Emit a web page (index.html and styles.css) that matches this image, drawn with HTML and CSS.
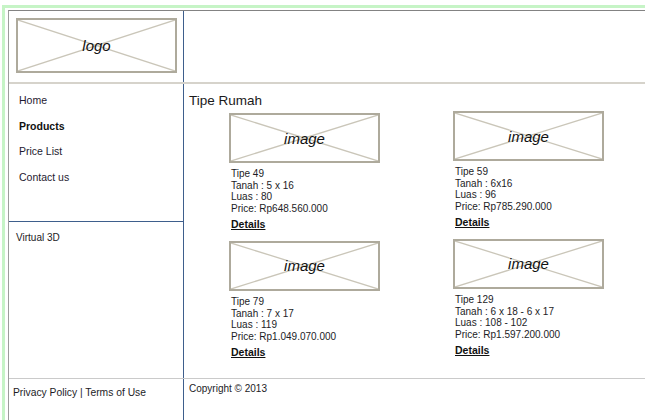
FILE: index.html
```html
<!DOCTYPE html>
<html lang="id">
<head>
<meta charset="utf-8">
<title>Tipe Rumah</title>
<link rel="stylesheet" href="styles.css">
</head>
<body>
<div class="frame">
  <div class="page">
    <div class="row head">
      <div class="side">
        <div class="ph logo">
          <svg class="ph-x" viewBox="0 0 100 100" preserveAspectRatio="none"><line x1="0" y1="0" x2="100" y2="100"/><line x1="100" y1="0" x2="0" y2="100"/></svg>
          <span>logo</span>
        </div>
      </div>
      <div class="main"></div>
    </div>

    <div class="row body">
      <div class="side">
        <ul class="nav">
          <li><a href="#">Home</a></li>
          <li class="active"><a href="#">Products</a></li>
          <li><a href="#">Price List</a></li>
          <li><a href="#">Contact us</a></li>
        </ul>
        <div class="extra">Virtual 3D</div>
      </div>
      <div class="main">
        <h1>Tipe Rumah</h1>
        <div class="grid">
          <div class="card low">
            <div class="ph pic">
              <svg class="ph-x" viewBox="0 0 100 100" preserveAspectRatio="none"><line x1="0" y1="0" x2="100" y2="100"/><line x1="100" y1="0" x2="0" y2="100"/></svg>
              <span>image</span>
            </div>
            <div class="info">
              <div>Tipe 49</div>
              <div>Tanah : 5 x 16</div>
              <div>Luas : 80</div>
              <div>Price: Rp648.560.000</div>
            </div>
            <a class="details" href="#">Details</a>
          </div>
          <div class="card">
            <div class="ph pic">
              <svg class="ph-x" viewBox="0 0 100 100" preserveAspectRatio="none"><line x1="0" y1="0" x2="100" y2="100"/><line x1="100" y1="0" x2="0" y2="100"/></svg>
              <span>image</span>
            </div>
            <div class="info">
              <div>Tipe 59</div>
              <div>Tanah : 6x16</div>
              <div>Luas : 96</div>
              <div>Price: Rp785.290.000</div>
            </div>
            <a class="details" href="#">Details</a>
          </div>
          <div class="card low">
            <div class="ph pic">
              <svg class="ph-x" viewBox="0 0 100 100" preserveAspectRatio="none"><line x1="0" y1="0" x2="100" y2="100"/><line x1="100" y1="0" x2="0" y2="100"/></svg>
              <span>image</span>
            </div>
            <div class="info">
              <div>Tipe 79</div>
              <div>Tanah : 7 x 17</div>
              <div>Luas : 119</div>
              <div>Price: Rp1.049.070.000</div>
            </div>
            <a class="details" href="#">Details</a>
          </div>
          <div class="card">
            <div class="ph pic">
              <svg class="ph-x" viewBox="0 0 100 100" preserveAspectRatio="none"><line x1="0" y1="0" x2="100" y2="100"/><line x1="100" y1="0" x2="0" y2="100"/></svg>
              <span>image</span>
            </div>
            <div class="info">
              <div>Tipe 129</div>
              <div>Tanah : 6 x 18 - 6 x 17</div>
              <div>Luas : 108 - 102</div>
              <div>Price: Rp1.597.200.000</div>
            </div>
            <a class="details" href="#">Details</a>
          </div>
        </div>
      </div>
    </div>

    <div class="row foot">
      <div class="side">Privacy Policy | Terms of Use</div>
      <div class="main">Copyright © 2013</div>
    </div>
  </div>
</div>
</body>
</html>
```

FILE: styles.css
```css
html, body {
  margin: 0;
  height: 100%;
  overflow: hidden;
  background: #fff;
}

body {
  font-family: "Liberation Sans", Arial, sans-serif;
  font-size: 10px;
  color: #1c1c26;
}

/* outer green frame */
.frame {
  margin: 5px 0 0 2px;
  border-left: 3px solid #c6f4c6;
  border-top: 3px solid #c6f4c6;
  padding: 2px 0 0 3px;
  height: 100%;
  box-sizing: border-box;
}

.page {
  border-left: 1px solid #9c9c9c;
  border-top: 1px solid #838383;
  height: 100%;
}

.row {
  display: flex;
}

.side {
  flex: none;
  width: 175px;
  box-sizing: border-box;
  border-right: 1px solid #3e5e8c;
}

.main {
  flex: 1;
  min-width: 0;
}

/* header */
.head {
  height: 73px;
  box-sizing: border-box;
  border-bottom: 2px solid #d6d3cb;
}

/* placeholder boxes */
.ph {
  position: relative;
  box-sizing: border-box;
  border: 2px solid #aeaa9c;
  display: flex;
  align-items: center;
  justify-content: center;
  font-style: italic;
  font-size: 15px;
  color: #111;
}

.ph span {
  position: relative;
}

.ph-x {
  position: absolute;
  inset: 0;
  width: 100%;
  height: 100%;
}

.ph-x line {
  stroke: #cac6b9;
  stroke-width: 1.3;
  vector-effect: non-scaling-stroke;
}

.logo {
  margin: 7px 0 0 7px;
  width: 161px;
  height: 55px;
}

/* body */
.body {
  height: 295px;
  box-sizing: border-box;
  border-bottom: 1px solid #cacaca;
}

.nav {
  list-style: none;
  margin: 0;
  padding: 4px 0 0 10px;
  height: 138px;
  box-sizing: border-box;
  border-bottom: 1px solid #3e5e8c;
  font-size: 10.5px;
}

.nav li {
  line-height: 25.6px;
}

.nav a {
  color: #1e1a30;
  text-decoration: none;
}

.nav .active a {
  font-weight: bold;
  color: #111;
}

.extra {
  padding: 9px 0 0 7px;
  line-height: 14px;
}

h1 {
  margin: 0;
  padding: 8px 0 0 5px;
  font-size: 13.5px;
  font-weight: normal;
  line-height: 17px;
  color: #1a1a1a;
}

.grid {
  display: grid;
  grid-template-columns: 224px 1fr;
  row-gap: 10px;
  padding: 2px 0 0 45px;
}

.card.low {
  padding-top: 2px;
  margin-bottom: -2px;
}

.pic {
  width: 151px;
  height: 50px;
}

.info {
  margin-top: 5px;
  line-height: 11.7px;
  padding-left: 2px;
}

.details {
  display: inline-block;
  margin: 3px 0 0 2px;
  line-height: 13px;
  font-size: 10.5px;
  font-weight: bold;
  color: #111;
  text-decoration: underline;
}

/* footer */
.foot {
  height: 41px;
  line-height: 13px;
}

.foot .side {
  padding: 7px 0 0 4px;
  font-size: 10.3px;
}

.foot .main {
  padding: 3px 0 0 5px;
}
```
